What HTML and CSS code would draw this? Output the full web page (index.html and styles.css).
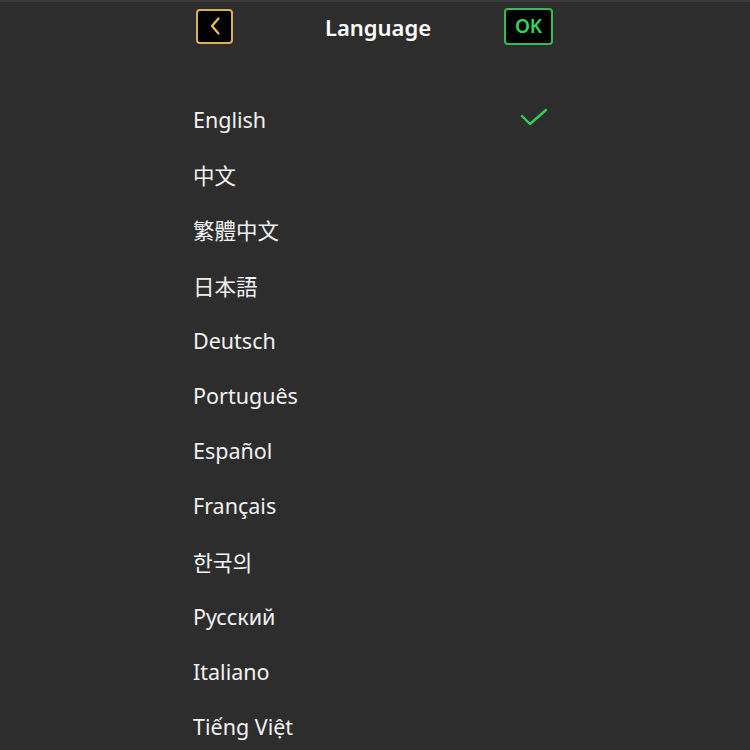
FILE: index.html
```html
<!DOCTYPE html>
<html lang="en">
<head>
  <meta charset="UTF-8">
  <meta name="viewport" content="width=device-width, initial-scale=1.0">
  <title>Language</title>
  <link rel="stylesheet" href="styles.css">
</head>
<body>
  <div class="screen">
    <!-- Top bar -->
    <div class="topbar">
      <button class="back" aria-label="Back">
        <svg width="12" height="20" viewBox="0 0 12 20">
          <path d="M9.5 2.5 L3 10 L9.5 17.5" fill="none" stroke="#e8c44e" stroke-width="2.2" stroke-linecap="round" stroke-linejoin="round"/>
        </svg>
      </button>
      <h1 class="title">Language</h1>
      <button class="ok">OK</button>
    </div>

    <!-- Language list -->
    <ul class="lang-list">
      <li class="selected">
        <span>English</span>
        <svg class="check" width="28" height="20" viewBox="0 0 28 20">
          <path d="M2 9 L10 17 L26 3" fill="none" stroke="#2fcf55" stroke-width="2.4" stroke-linecap="round" stroke-linejoin="round"/>
        </svg>
      </li>
      <li lang="zh-CN"><span>中文</span></li>
      <li lang="zh-TW"><span>繁體中文</span></li>
      <li lang="ja"><span>日本語</span></li>
      <li><span>Deutsch</span></li>
      <li><span>Português</span></li>
      <li><span>Español</span></li>
      <li><span>Français</span></li>
      <li lang="ko"><span>한국의</span></li>
      <li><span>Русский</span></li>
      <li><span>Italiano</span></li>
      <li><span>Tiếng Việt</span></li>
    </ul>
  </div>
</body>
</html>
```

FILE: styles.css
```css
/* Language settings screen */
body {
  margin: 0;
  height: 750px;
  overflow: hidden;
  background-color: #2d2d2d;
  border-top: 2px solid #3b3b3b;
  font-family: "Noto Sans", "Noto Sans CJK SC", sans-serif;
  color: #f2f2f2;
}

.screen {
  width: 360px;
  margin-left: 193px;
}

.topbar {
  display: grid;
  grid-template-columns: 37px 1fr 49px;
  align-items: center;
  height: 50px;
  padding-left: 3px;
}

.back,
.ok {
  display: flex;
  align-items: center;
  justify-content: center;
  padding: 0;
  background-color: #000;
  border-radius: 4px;
  cursor: pointer;
}

.back {
  width: 37px;
  height: 35px;
  border: 2px solid #d9b24f;
  margin-top: -2px;
}

.ok {
  width: 49px;
  height: 37px;
  border: 2px solid #2fbf52;
  color: #35d35c;
  font-family: "Noto Sans", sans-serif;
  font-size: 19px;
  font-weight: 600;
  margin-top: -2px;
}

.title {
  margin: 0;
  padding-left: 19px;
  text-align: center;
  font-size: 22px;
  font-weight: 600;
  color: #fff;
}

.lang-list {
  list-style: none;
  margin: 0;
  padding: 40px 0 0 0;
}

.lang-list li {
  display: flex;
  align-items: center;
  justify-content: space-between;
  height: 55.2px;
  font-size: 21.5px;
}

.lang-list li[lang="zh-CN"],
.lang-list li[lang="zh-TW"] {
  font-family: "Noto Sans", "Noto Sans CJK TC", sans-serif;
}

.lang-list li[lang="ja"] {
  font-family: "Noto Sans", "Noto Sans CJK JP", sans-serif;
}

.lang-list li[lang="ko"] {
  font-family: "Noto Sans", "Noto Sans CJK KR", sans-serif;
}

.check {
  margin-right: 5px;
  margin-top: -6px;
}
```
